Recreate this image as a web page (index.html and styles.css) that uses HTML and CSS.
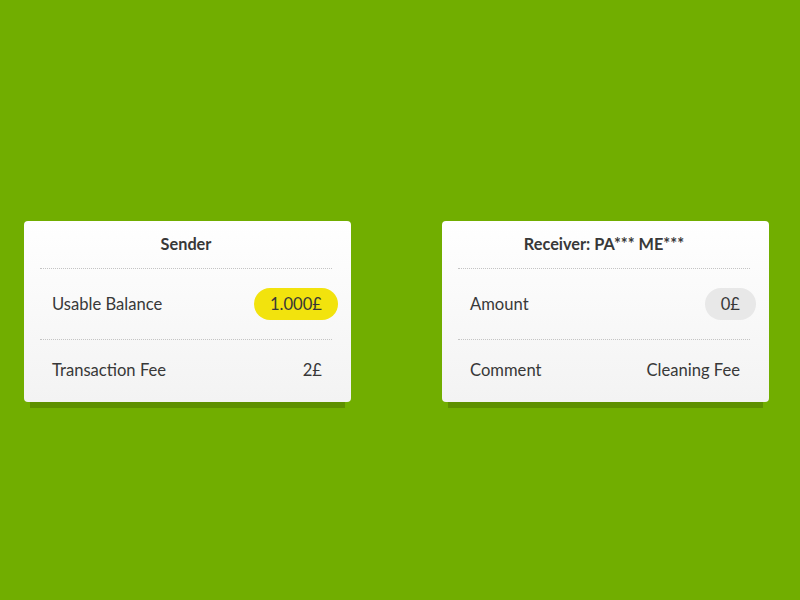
FILE: index.html
```html
<!DOCTYPE html>
<html lang="en">
<head>
<meta charset="utf-8">
<title>Transfer</title>
<link rel="stylesheet" href="styles.css">
</head>
<body>
<main class="stage">
  <section class="card">
    <h2 class="card-title">Sender</h2>
    <div class="row row-first">
      <span class="label">Usable Balance</span>
      <span class="value pill pill-yellow">1.000£</span>
    </div>
    <div class="row row-last">
      <span class="label">Transaction Fee</span>
      <span class="value">2£</span>
    </div>
  </section>
  <section class="card">
    <h2 class="card-title">Receiver: PA*** ME***</h2>
    <div class="row row-first">
      <span class="label">Amount</span>
      <span class="value pill pill-grey">0£</span>
    </div>
    <div class="row row-last">
      <span class="label">Comment</span>
      <span class="value">Cleaning Fee</span>
    </div>
  </section>
</main>
</body>
</html>
```
FILE: styles.css
```css
html, body {
  margin: 0;
  padding: 0;
}
body {
  background: #71ae00;
  width: 800px;
  height: 600px;
  overflow: hidden;
  font-family: Lato, "Noto Sans", sans-serif;
  color: #383838;
}
.stage {
  display: flex;
  gap: 91px;
  padding: 221px 0 0 24px;
}
.card {
  width: 327px;
  height: 181px;
  box-sizing: border-box;
  padding: 0 19px 0 16px;
  border-radius: 4px;
  background: linear-gradient(#ffffff, #f3f3f3);
  box-shadow: 0 12px 0 -6px rgba(0, 0, 0, 0.17);
  display: flex;
  flex-direction: column;
}
.card-title {
  margin: 0;
  height: 47px;
  line-height: 46px;
  font-size: 16.3px;
  font-weight: bold;
  text-align: center;
  border-bottom: 1px dotted #c4c4c4;
}
.row {
  display: flex;
  align-items: center;
  justify-content: space-between;
  padding-left: 12px;
  font-size: 16.6px;
}
.row-first {
  height: 70px;
  border-bottom: 1px dotted #c4c4c4;
}
.row-last {
  flex: 1;
  padding-bottom: 2px;
}
.value {
  padding: 0 16px;
  margin-right: -6px;
  height: 32px;
  line-height: 32px;
  border-radius: 16px;
}
.pill-yellow {
  background: #f2e30d;
}
.pill-grey {
  background: #e8e8e8;
}
```
